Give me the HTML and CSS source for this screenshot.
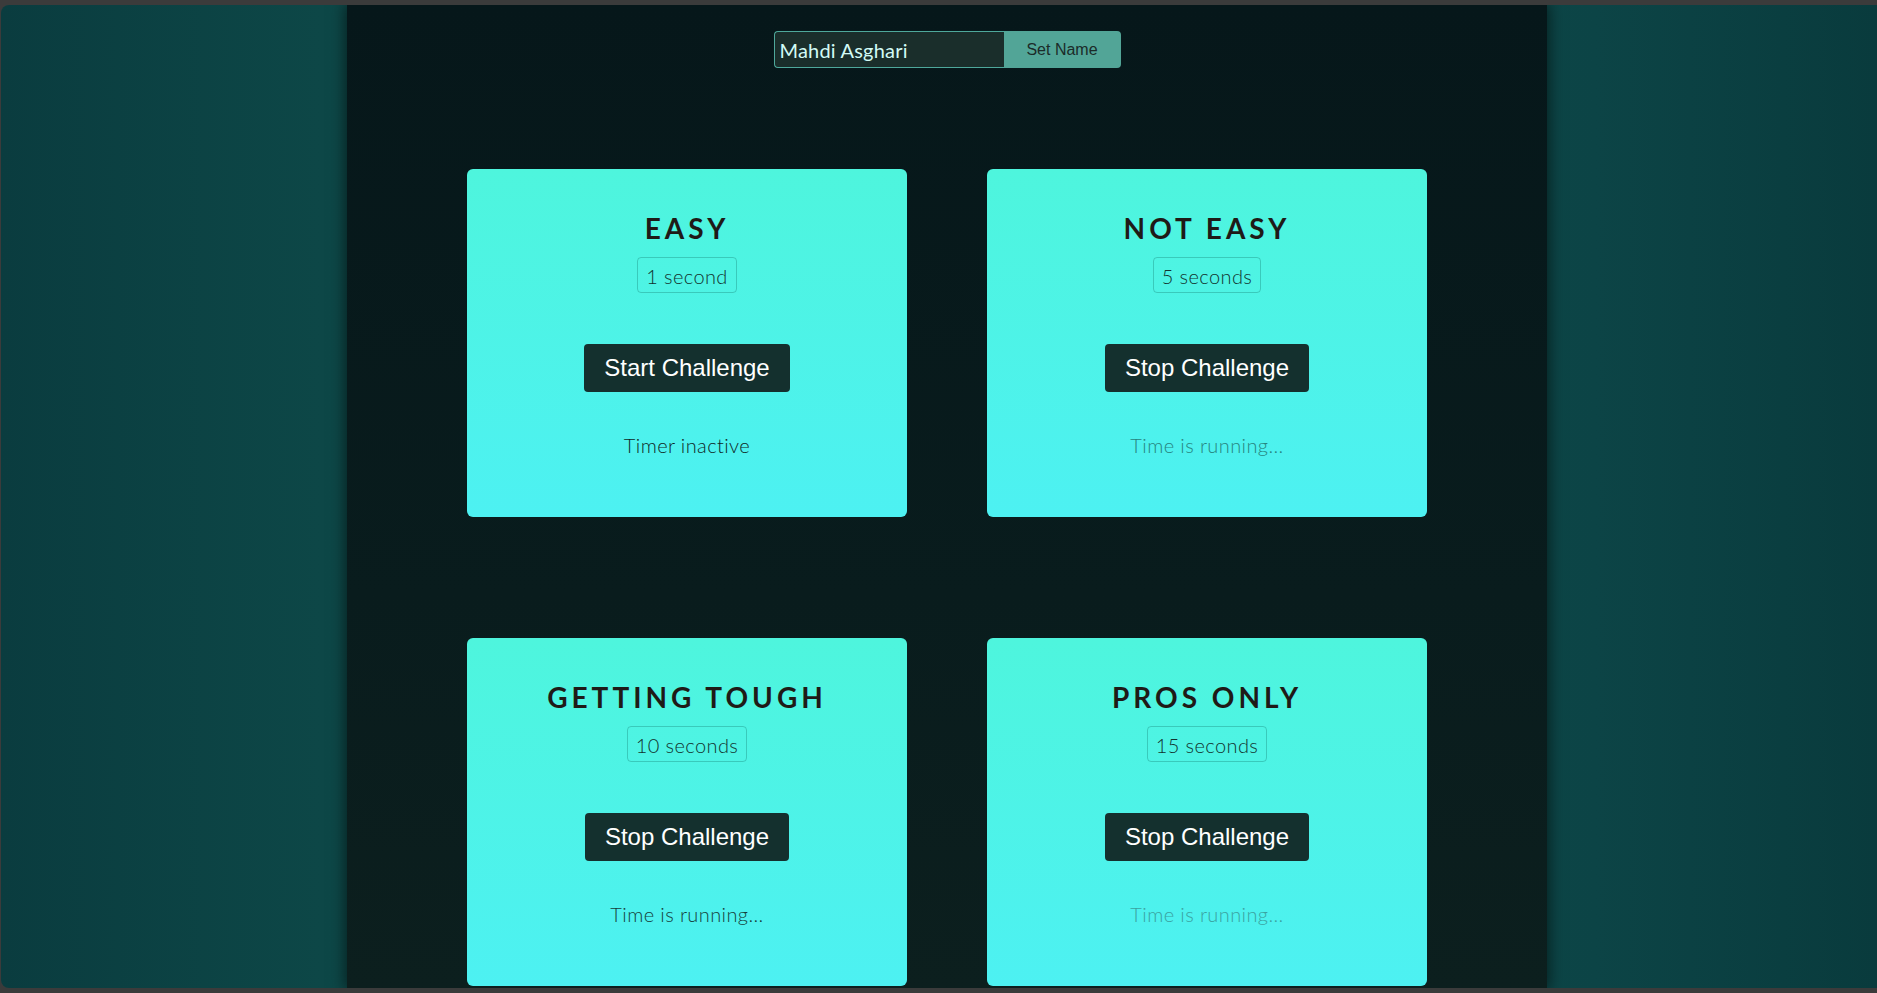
FILE: index.html
```html
<!DOCTYPE html>
<html lang="en">
<head>
<meta charset="utf-8">
<title>Timer Challenge</title>
<link rel="stylesheet" href="styles.css">
</head>
<body>
<div class="window">
  <main class="column">
    <form class="player">
      <input class="player-input" type="text" value="Mahdi Asghari">
      <button class="player-btn" type="button">Set Name</button>
    </form>
    <section class="grid">
      <div class="card">
        <h2 class="card-title">EASY</h2>
        <p class="badge">1 second</p>
        <button class="card-btn" type="button">Start Challenge</button>
        <p class="status status-idle">Timer inactive</p>
      </div>
      <div class="card">
        <h2 class="card-title">NOT EASY</h2>
        <p class="badge">5 seconds</p>
        <button class="card-btn" type="button">Stop Challenge</button>
        <p class="status status-faint">Time is running...</p>
      </div>
      <div class="card">
        <h2 class="card-title">GETTING TOUGH</h2>
        <p class="badge">10 seconds</p>
        <button class="card-btn" type="button">Stop Challenge</button>
        <p class="status status-strong">Time is running...</p>
      </div>
      <div class="card">
        <h2 class="card-title">PROS ONLY</h2>
        <p class="badge">15 seconds</p>
        <button class="card-btn" type="button">Stop Challenge</button>
        <p class="status status-fainter">Time is running...</p>
      </div>
    </section>
  </main>
</div>
</body>
</html>
```

FILE: styles.css
```css
html {
  background: #3b3b3b;
}
body {
  margin: 0;
  height: 993px;
  overflow: hidden;
  font-family: "Lato", "Noto Sans", sans-serif;
}
.window {
  margin: 5px 0 5px 1px;
  height: 983px;
  box-sizing: border-box;
  padding-left: 346px;
  border-radius: 8px 0 0 8px;
  overflow: hidden;
  background: linear-gradient(to right, #0a3c3f 0%, #0d4747 17%, #0e4a48 30%, #0e4a48 70%, #0c4446 85%, #093b3d 100%);
}
.column {
  width: 1200px;
  height: 100%;
  box-sizing: border-box;
  padding-top: 26px;
  background: linear-gradient(to bottom, #06171a 0%, #091c1d 60%, #0c1f1e 100%);
  box-shadow: 0 0 14px 2px rgba(0, 0, 0, 0.55);
  display: flex;
  flex-direction: column;
  align-items: center;
}
.player {
  display: flex;
  margin: 0 0 101px 0;
}
.player-input {
  width: 230px;
  height: 37px;
  box-sizing: border-box;
  margin: 0;
  padding: 0 5px;
  border: 1px solid #4ea89b;
  border-right: none;
  border-radius: 4px 0 0 4px;
  background: #1a2e2b;
  color: #d2fbf6;
  font-family: "Lato", "Noto Sans", sans-serif;
  font-weight: 400;
  font-size: 20px;
  letter-spacing: 0.2px;
  outline: none;
}
.player-btn {
  width: 117px;
  height: 37px;
  margin: 0;
  border: none;
  border-radius: 0 4px 4px 0;
  background: #52a597;
  color: #1b2b29;
  font-family: "Liberation Sans", Arial, sans-serif;
  font-size: 16px;
}
.grid {
  display: grid;
  grid-template-columns: 440px 440px;
  column-gap: 80px;
  row-gap: 121px;
}
.card {
  height: 348px;
  box-sizing: border-box;
  padding-top: 41px;
  border-radius: 6px;
  background: linear-gradient(to bottom, #4ef5dd 0%, #4df1f2 100%);
  display: flex;
  flex-direction: column;
  align-items: center;
}
.card-title {
  margin: 0;
  font-family: "Lato", "Noto Sans", sans-serif;
  font-weight: 700;
  font-size: 28px;
  line-height: 36px;
  letter-spacing: 4px;
  color: #1f1a17;
}
.badge {
  margin: 11px 0 0;
  padding: 6px 8px 4px;
  line-height: 24px;
  font-size: 20px;
  font-weight: 300;
  letter-spacing: 0.4px;
  color: #12332f;
  border: 1px solid rgba(34, 150, 138, 0.45);
  border-radius: 4px;
}
.card-btn {
  margin-top: 51px;
  height: 48px;
  padding: 0 20px;
  border: none;
  border-radius: 4px;
  background: #14302e;
  color: #ffffff;
  font-family: "Liberation Sans", Arial, sans-serif;
  font-size: 24px;
}
.status {
  margin: 41px 0 0;
  line-height: 24px;
  font-size: 20px;
  font-weight: 300;
  letter-spacing: 0.4px;
}
.status-idle {
  color: #0f2826;
}
.status-faint {
  color: #278580;
}
.status-strong {
  color: #163e3b;
}
.status-fainter {
  color: #3aa3a1;
}
```
